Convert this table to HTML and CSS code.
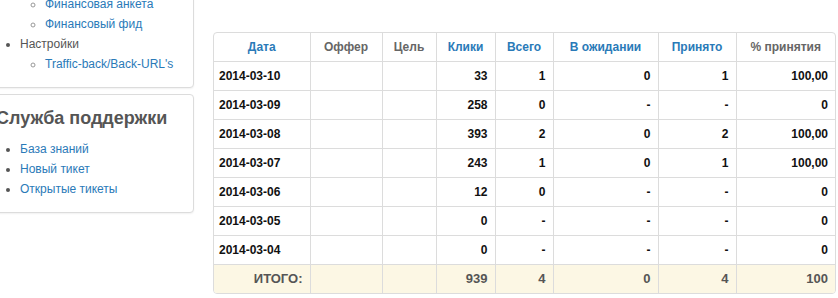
FILE: index.html
```html
<!DOCTYPE html>
<html lang="ru">
<head>
<meta charset="utf-8">
<link rel="stylesheet" href="styles.css">
</head>
<body>
<div class="page">
  <aside class="sidebar">
    <div class="panel panel-menu">
      <ul class="menu">
        <li class="menu-group">
          <ul class="submenu">
            <li><a href="#">Финансовая анкета</a></li>
            <li><a href="#">Финансовый фид</a></li>
          </ul>
        </li>
        <li class="menu-group">Настройки
          <ul class="submenu">
            <li><a href="#">Traffic-back/Back-URL's</a></li>
          </ul>
        </li>
      </ul>
    </div>
    <div class="panel panel-support">
      <h3 class="panel-title">Служба поддержки</h3>
      <ul class="menu">
        <li><a href="#">База знаний</a></li>
        <li><a href="#">Новый тикет</a></li>
        <li><a href="#">Открытые тикеты</a></li>
      </ul>
    </div>
  </aside>
  <main class="content">
    <div class="table-wrap">
      <table class="stats">
        <colgroup>
          <col class="c-date"><col class="c-offer"><col class="c-goal"><col class="c-clicks">
          <col class="c-total"><col class="c-wait"><col class="c-acc"><col class="c-pct">
        </colgroup>
        <thead>
          <tr>
            <th class="sort">Дата</th>
            <th>Оффер</th>
            <th>Цель</th>
            <th class="sort">Клики</th>
            <th class="sort">Всего</th>
            <th class="sort">В ожидании</th>
            <th class="sort">Принято</th>
            <th>% принятия</th>
          </tr>
        </thead>
        <tbody>
          <tr><td class="date">2014-03-10</td><td></td><td></td><td>33</td><td>1</td><td>0</td><td>1</td><td>100,00</td></tr>
          <tr><td class="date">2014-03-09</td><td></td><td></td><td>258</td><td>0</td><td>-</td><td>-</td><td>0</td></tr>
          <tr><td class="date">2014-03-08</td><td></td><td></td><td>393</td><td>2</td><td>0</td><td>2</td><td>100,00</td></tr>
          <tr><td class="date">2014-03-07</td><td></td><td></td><td>243</td><td>1</td><td>0</td><td>1</td><td>100,00</td></tr>
          <tr><td class="date">2014-03-06</td><td></td><td></td><td>12</td><td>0</td><td>-</td><td>-</td><td>0</td></tr>
          <tr><td class="date">2014-03-05</td><td></td><td></td><td>0</td><td>-</td><td>-</td><td>-</td><td>0</td></tr>
          <tr><td class="date">2014-03-04</td><td></td><td></td><td>0</td><td>-</td><td>-</td><td>-</td><td>0</td></tr>
        </tbody>
        <tfoot>
          <tr class="total"><td>ИТОГО:</td><td></td><td></td><td>939</td><td>4</td><td>0</td><td>4</td><td>100</td></tr>
        </tfoot>
      </table>
    </div>
  </main>
</div>
</body>
</html>
```

FILE: styles.css
```css
html, body {
  margin: 0;
  padding: 0;
  background: #fff;
}
body {
  font-family: "Liberation Sans", Arial, sans-serif;
  font-size: 12px;
  color: #333;
  overflow: hidden;
}
a {
  color: #2a7ab8;
  text-decoration: none;
}
.page {
  display: flex;
  align-items: flex-start;
  gap: 19px;
}
.sidebar {
  width: 209px;
  margin-left: -15px;
  margin-top: -20px;
  display: flex;
  flex-direction: column;
  gap: 6px;
  flex: none;
}
.panel {
  border: 1px solid #dcdcdc;
  border-radius: 4px;
  background: #fff;
  box-shadow: 0 1px 2px rgba(0,0,0,0.06);
}
.panel-menu {
  padding: 13px 10px 13px;
}
.menu {
  margin: 0;
  padding: 0 0 0 24px;
  list-style: disc;
  line-height: 20px;
  color: #555;
  white-space: nowrap;
}
.menu li::marker {
  color: #555;
}
.menu-group:first-child {
  list-style: none;
}
.submenu {
  margin: 0;
  padding: 0 0 0 25px;
  list-style: circle;
}
.submenu li::marker {
  color: #999;
}
.panel-support {
  padding: 0 10px 13px;
}
.panel-title {
  margin: 0;
  padding: 10px 0 8px;
  font-size: 18px;
  line-height: 26px;
  font-weight: bold;
  color: #555;
}
.content {
  padding-top: 32px;
}
.table-wrap {
  border: 1px solid #dcdcdc;
  border-radius: 4px;
  overflow: hidden;
  width: 621px;
}
.stats {
  width: 621px;
  table-layout: fixed;
  border-collapse: collapse;
  font-size: 12px;
  font-weight: bold;
  color: #111;
}
.c-date { width: 96px; }
.c-offer { width: 72px; }
.c-goal { width: 54px; }
.c-clicks { width: 59px; }
.c-total { width: 58px; }
.c-wait { width: 105px; }
.c-acc { width: 78px; }
.c-pct { width: 99px; }
.stats th,
.stats td {
  height: 28px;
  padding: 0 7px;
  line-height: 16px;
  text-align: right;
  white-space: nowrap;
}
.stats th {
  text-align: center;
  color: #666;
}
.stats th.sort {
  color: #2a7ab8;
}
.stats th + th,
.stats td + td {
  border-left: 1px solid #dcdcdc;
}
.stats tbody tr td,
.stats tfoot tr td {
  border-top: 1px solid #dcdcdc;
}
.stats td.date {
  text-align: left;
  padding-left: 5px;
}
.total td {
  background: #fcf7e4;
  color: #555;
  font-size: 13px;
}
```
